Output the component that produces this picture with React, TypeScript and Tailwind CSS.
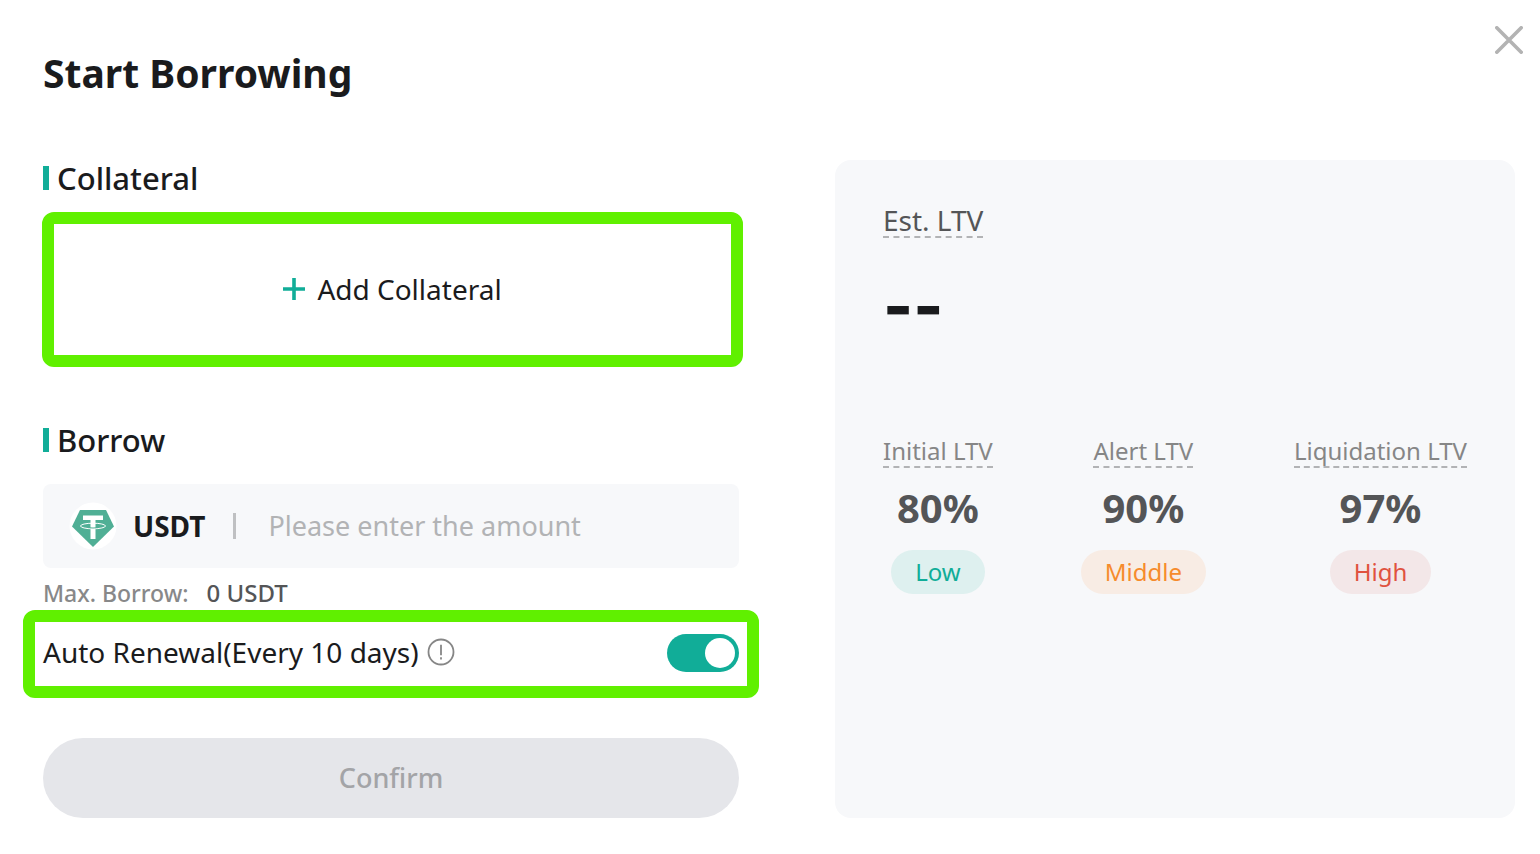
import { useState } from "react";

type Level = { label: string; value: string; badge: string; tone: string };

const levels: Level[] = [
  { label: "Initial LTV", value: "80%", badge: "Low", tone: "bg-[#def0ef] text-[#11ad98]" },
  { label: "Alert LTV", value: "90%", badge: "Middle", tone: "bg-[#f8ece4] text-[#f68b2c]" },
  { label: "Liquidation LTV", value: "97%", badge: "High", tone: "bg-[#f3e7e8] text-[#e0523f]" },
];

function SectionTitle({ children }: { children: string }) {
  return (
    <h2 className="flex h-9 items-center gap-2 text-[31px] leading-9 font-medium">
      <span className="h-6 w-1.5 bg-[#11ad98]" />
      {children}
    </h2>
  );
}

function TetherIcon() {
  return (
    <svg viewBox="0 0 48 48" className="size-12 shrink-0" aria-hidden="true">
      <circle cx="24" cy="24" r="23.500" fill="#fff" />
      <path d="M11 8h26l8 16.500L24 45 3 24.500z" fill="#50af95" />
      <path d="M14 13.500h20v4.500H26.500v19h-5V18H14z" fill="#fff" />
      <ellipse cx="24" cy="24" rx="12.500" ry="2.800" fill="none" stroke="#fff" strokeWidth="1" />
      <path d="M20.500 25.800q3.500.4 7 0" fill="none" stroke="#50af95" strokeWidth="1" />
    </svg>
  );
}

function CloseIcon() {
  return (
    <svg viewBox="0 0 28 28" className="size-7" fill="none" stroke="#b3b3b3" strokeWidth="3.600" strokeLinecap="round" aria-hidden="true">
      <path d="M1.800 1.800l24.400 24.400M26.200 1.800L1.800 26.200" />
    </svg>
  );
}

function PlusIcon() {
  return (
    <svg viewBox="0 0 22 22" className="size-[22px]" fill="none" stroke="#11ad98" strokeWidth="3.600" aria-hidden="true">
      <path d="M0 11h22M11 0v22" />
    </svg>
  );
}

function InfoIcon() {
  return (
    <svg viewBox="0 0 28 28" className="size-7" fill="none" stroke="#868686" strokeWidth="1.800" aria-hidden="true">
      <circle cx="14" cy="14" r="12.500" />
      <path d="M14 6.800v10.500M14 19.200v2.200" />
    </svg>
  );
}

export default function App() {
  const [amount, setAmount] = useState("");
  const [renew, setRenew] = useState(true);

  return (
    <main className="relative bg-white pr-[25px] pb-9 pl-[43px] font-['Noto_Sans',sans-serif] text-[#1a1b1d]">
      <button type="button" aria-label="Close" className="absolute top-[26px] right-[17px]">
        <CloseIcon />
      </button>
      <header className="flex h-40 items-start pt-12">
        <h1 className="text-[39px] leading-[50px] font-bold">Start Borrowing</h1>
      </header>

      <div className="grid grid-cols-[87fr_85fr] gap-24">
        <form className="flex flex-col" onSubmit={(e) => e.preventDefault()}>
          <SectionTitle>Collateral</SectionTitle>
          <button
            type="button"
            className="mt-4 -mr-1 -ml-px flex h-[155px] items-center justify-center gap-3 rounded-xl border-12 border-[#60f000] pb-0.5 text-[28px]"
          >
            <PlusIcon />
            Add Collateral
          </button>

          <div className="mt-[55px]">
            <SectionTitle>Borrow</SectionTitle>
          </div>
          <div className="mt-[26px] flex h-[84px] items-center rounded-lg bg-[#f7f8fa] px-[26px]">
            <TetherIcon />
            <label htmlFor="amount" className="ml-4 text-[28px] font-bold">
              USDT
            </label>
            <span className="ml-7 h-[26px] w-[3px] shrink-0 bg-[#bfc0c2]" />
            <input
              id="amount"
              inputMode="decimal"
              value={amount}
              onChange={(e) => setAmount(e.target.value)}
              placeholder="Please enter the amount"
              className="ml-8 min-w-0 flex-1 bg-transparent text-[27px] outline-none placeholder:text-[#b2b3b5]"
            />
          </div>
          <p className="mt-2 flex h-[34px] items-center gap-[18px] text-[23px] font-medium">
            <span className="text-[#888889]">Max. Borrow:</span>
            <span className="text-[24px] text-[#545557]">0 USDT</span>
          </p>

          <div className="-mx-5 flex h-[88px] items-center justify-between rounded-xl border-12 border-[#60f000] px-2 pb-0.5">
            <div className="flex items-center gap-2 pb-0.5">
              <label htmlFor="renew" className="text-[28px]">
                Auto Renewal(Every 10 days)
              </label>
              <InfoIcon />
            </div>
            <input
              id="renew"
              type="checkbox"
              role="switch"
              checked={renew}
              onChange={(e) => setRenew(e.target.checked)}
              className="flex h-[38px] w-[72px] appearance-none items-center rounded-full bg-[#c4c6ca] px-1 before:size-[30px] before:rounded-full before:bg-white before:content-[''] checked:justify-end checked:bg-[#11ad98]"
            />
          </div>

          <button type="submit" disabled className="mt-10 h-20 rounded-full bg-[#e5e6ea] text-[27px] font-medium text-[#a3a4a7]">
            Confirm
          </button>
        </form>

        <section className="rounded-2xl bg-[#f7f8fa] px-12 pt-11">
          <h2 className="w-fit border-b-2 border-dashed border-[#b2b3b5] text-[28px] leading-8 text-[#545557]">Est. LTV</h2>
          <p className="mt-7 font-[Inter,sans-serif] text-[64px] leading-20 font-extrabold">--</p>
          <ul className="mt-[90px] flex justify-between">
            {levels.map((l) => (
              <li key={l.label} className="flex flex-col items-center">
                <span className="border-b-2 border-dashed border-[#b2b3b5] text-[24px] leading-[30px] text-[#868686]">{l.label}</span>
                <strong className="mt-3 text-[40px] leading-14 font-bold text-[#545557]">{l.value}</strong>
                <span className={`mt-3.5 rounded-full px-6 text-[24px] leading-11 ${l.tone}`}>{l.badge}</span>
              </li>
            ))}
          </ul>
        </section>
      </div>
    </main>
  );
}
